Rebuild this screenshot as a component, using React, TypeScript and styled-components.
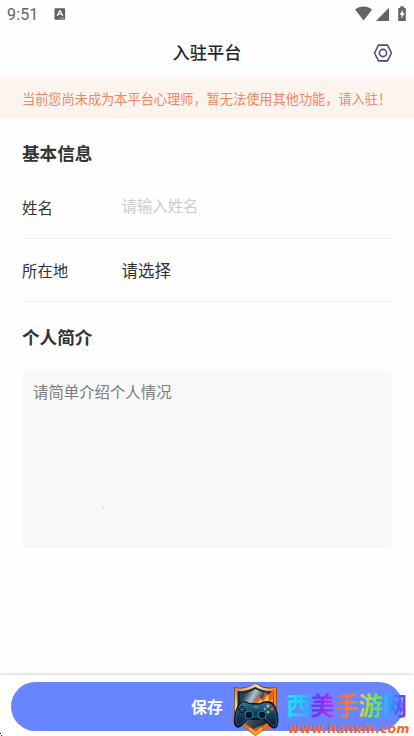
import React from "react";
import styled, { createGlobalStyle } from "styled-components";

const GlobalStyle = createGlobalStyle`
  * { box-sizing: border-box; }
  html, body { margin: 0; background: #fff; overflow: hidden; }
  body, input, textarea, button {
    font-family: "Noto Sans CJK SC", sans-serif;
  }
`;

const Screen = styled.main`
  width: 414px;
  height: 736px;
  display: flex;
  flex-direction: column;
  overflow: hidden;
  position: relative;
  background: #fefefe;
  color: #303234;
`;

const StatusBar = styled.div`
  height: 28px;
  flex: none;
  display: flex;
  align-items: center;
  justify-content: space-between;
  padding: 0 6px 0 7px;
  color: #646464;
`;

const StatusGroup = styled.div`
  display: flex;
  align-items: center;
`;

const Clock = styled.span`
  font: 400 16px/28px Roboto, sans-serif;
  letter-spacing: 0.15px;
  width: 47px;
  padding-top: 1px;
`;

const Header = styled.header`
  height: 50px;
  flex: none;
  display: grid;
  grid-template-columns: 40px 1fr 40px;
  align-items: center;
`;

const Title = styled.h1`
  grid-column: 2;
  margin: 0;
  text-align: center;
  font-size: 17.2px;
  line-height: 48px;
  height: 50px;
  font-weight: 500;
  color: #242424;
`;

const SettingsButton = styled.button`
  border: 0;
  padding: 0;
  background: none;
  width: 20px;
  height: 20px;
  margin-left: -1px;
  display: flex;
`;

const Notice = styled.div`
  height: 41px;
  flex: none;
  padding-left: 22px;
  background: #fcf4ef;
  color: #f18764;
  font-size: 13.2px;
  line-height: 41px;
  white-space: nowrap;
`;

const Form = styled.form`
  flex: 1;
  padding: 0 22px;
`;

const SectionTitle = styled.h2<{ $height: number; $line: number }>`
  margin: 0;
  height: ${(p) => p.$height}px;
  line-height: ${(p) => p.$line}px;
  font-size: 17.6px;
  font-weight: 700;
`;

const Field = styled.label<{ $height: number }>`
  display: grid;
  grid-template-columns: 100px 1fr;
  align-items: center;
  height: ${(p) => p.$height}px;
  border-bottom: 1px solid #f0f0f1;
`;

const FieldName = styled.span`
  font-size: 15.4px;
  line-height: 24px;
`;

const TextInput = styled.input`
  border: 0;
  padding: 0;
  margin: -4px 0 0 -0.5px;
  outline: 0;
  background: none;
  width: 100%;
  height: 28px;
  font-size: 15.4px;
  &::placeholder { color: #cbcccd; }
`;

const SelectValue = styled.span`
  margin-left: -0.5px;
  font-size: 16.5px;
  line-height: 24px;
`;

const Biography = styled.textarea`
  display: block;
  width: 370px;
  height: 177px;
  resize: none;
  outline: 0;
  border: 0;
  border-radius: 5px;
  padding: 8px 11px;
  background: #f8f8f8;
  font-size: 15.4px;
  line-height: 24px;
  &::placeholder { color: #7d7d7d; }
`;

const Footer = styled.footer`
  height: 61px;
  flex: none;
  padding: 7px 11px 0;
  background: #fff;
  box-shadow: 0 -1px 3px rgba(0, 0, 0, 0.17);
`;

const SaveButton = styled.button`
  display: block;
  width: 392px;
  height: 49px;
  border: 0;
  border-radius: 25px;
  background: #6785ff;
  color: #fff;
  font-size: 16px;
  font-weight: 700;
  line-height: 48px;
  padding: 0 0 1px;
`;

const Watermark = styled.div`
  position: absolute;
  left: 231px;
  top: 682px;
  display: flex;
`;

const BrandText = styled.div`
  width: 128px;
  margin-left: 6px;
`;

const BrandName = styled.div`
  display: flex;
  height: 38px;
  margin-top: 5px;
  font-size: 24.5px;
  font-weight: 700;
  line-height: 36px;
`;

const BrandGlyph = styled.span<{ $fill: string }>`
  flex: none;
  width: 24.2px;
  background: ${(p) => p.$fill};
  background-clip: text;
  -webkit-background-clip: text;
  color: transparent;
`;

const BrandUrl = styled.div`
  margin: -5px 0 0 2px;
  font: italic 700 12.7px/18px "DejaVu Sans", sans-serif;
  color: #f16831;
  white-space: nowrap;
`;

const Speck = styled.i<{ $x: number; $y: number; $size: number; $color: string }>`
  position: absolute;
  left: ${(p) => p.$x}px;
  top: ${(p) => p.$y}px;
  width: ${(p) => p.$size}px;
  height: ${(p) => p.$size}px;
  background: ${(p) => p.$color};
`;

const brand = [
  ["西", "linear-gradient(100deg, #12edf0 20%, #22b7fa 85%)"],
  ["美", "linear-gradient(100deg, #4b45f8 10%, #8b2cf0 50%, #e62ce0)"],
  ["手", "linear-gradient(100deg, #ff5a3c, #ff9010)"],
  ["游", "linear-gradient(100deg, #ffc52e 5%, #7cec48 50%, #1fe0a4)"],
  ["网", "linear-gradient(100deg, #1fd0fa 10%, #3670ff 55%, #8a28ea 90%)"],
];

const KeyboardIcon = () => (
  <svg width="12" height="12" viewBox="0 0 12 12">
    <rect x=".5" y=".2" width="10.6" height="11.5" rx=".8" fill="#606060" />
    <path d="M3.1 8 5.6 2.8h.8L8.7 8M4.2 6.2h3.4" fill="none" stroke="#fff" strokeWidth="1.25" />
    <path d="M6.3 10h1.2M8.7 10h1.2" stroke="#ddd" />
  </svg>
);

const SignalIcons = () => (
  <svg width="53" height="16" viewBox="0 0 53 16" fill="#646464">
    <path d="M0 3.5C5.2-.4 12 -.4 17.2 3.5L8.6 14.4Z" />
    <path d="M34 1.8V15H21Z" />
    <path d="M43.2 2h2V.2h3.6V2h2v13h-7.6Z" />
    <path d="m47.9 3.7-3.4 5h2v3.7l3.3-5.3h-1.9Z" fill="#fff" />
  </svg>
);

const SettingsIcon = () => (
  <svg width="20" height="20" viewBox="0 0 20 20" fill="none" stroke="#4b4e70" strokeWidth="1.6" strokeLinejoin="round">
    <path d="M5.5 2.1h9L18.5 10l-4 7.9h-9L1.5 10Z" />
    <circle cx="10" cy="10" r="3.6" />
  </svg>
);

const ControllerShield = () => (
  <svg width="49" height="54" viewBox="0 0 49 54">
    <defs>
      <linearGradient id="rim" x2=".8" y2="1">
        <stop stopColor="#c4793e" /><stop offset=".3" stopColor="#ffe2a2" />
        <stop offset=".55" stopColor="#e8842c" /><stop offset="1" stopColor="#ffa11d" />
      </linearGradient>
      <linearGradient id="steel" x2="1" y2=".7">
        <stop stopColor="#182e41" /><stop offset=".25" stopColor="#2b4455" /><stop offset=".4" stopColor="#b7c2c6" /><stop offset=".55" stopColor="#3d5564" /><stop offset="1" stopColor="#101721" />
      </linearGradient>
      <linearGradient id="pad" y2="1" x2="0">
        <stop stopColor="#347091" /><stop offset=".4" stopColor="#194561" /><stop offset="1" stopColor="#071c30" />
      </linearGradient>
    </defs>
    <path d="M24.5 1C18 5 10 7 3 5v22c0 12 12 20 21.5 27C35 47 46 39 46 27V5C38 7 30 5 24.5 1Z" fill="#633023" />
    <path d="M24.5 3C18 7 11 9 5 7v20c0 11 10 18 19.5 25C34 45 44 38 44 27V7C37 9 30 7 24.5 3Z" fill="url(#steel)" stroke="url(#rim)" strokeWidth="2.7" />
    <path d="M8 10c6 1 11-1 16.5-4C30 9 35 11 41 10v15H8Z" fill="none" stroke="#19242e" strokeWidth="1.5" />
    <path d="M20 23c3-5 6-3 7-10l4 5 4-9 1 5 7-7-1 16 5 4-4 7-24-4Z" fill="#f35a15" />
    <path d="m25 22 5-5 2 3 5-8 1 8 4-3-3 11Z" fill="#ffc542" />
    <path d="M3 23C0 31 1 42 6 44l5-5 11 8 13-5 9-17 3 9-7 13-10 1-5 4-12-7-9-2C-1 39-1 31 3 23Z" fill="#ed641d" opacity=".85" />
    <path d="M10 20c4-2 7 1 10 1h9c4-2 9-3 13 0 5 5 7 19 4 24-4 5-9-3-13-7H16c-3 4-8 11-12 6-3-5 0-20 6-24Z" fill="#07172a" />
    <path d="M11 21c3-1 6 1 9 2h9c4-2 8-3 12 0 4 5 5 16 4 20-3 4-8-5-12-8H17c-4 4-8 10-11 7-3-4 0-17 5-21Z" fill="url(#pad)" stroke="#277393" strokeWidth=".8" />
    <circle cx="18" cy="33" r="4" fill="#061524" stroke="#247fa4" />
    <circle cx="31" cy="33" r="4" fill="#061524" stroke="#247fa4" />
    <path d="M11 24v7m-3.5-3.5h7" stroke="#071625" strokeWidth="2.4" />
    <path d="M11 25v5m-2.5-2.5h5" stroke="#4a9cb5" strokeWidth=".7" />
    <circle cx="37" cy="24" r="1.5" fill="#ffba36" /><circle cx="41" cy="27" r="1.5" fill="#f34e4d" />
    <circle cx="37" cy="30" r="1.5" fill="#68cd60" /><circle cx="34" cy="27" r="1.4" fill="#31b9de" />
    <path d="M23 25h4" stroke="#40afd0" />
    <path d="m18 46 6.5 5 6.5-5" fill="none" stroke="#ffad28" strokeWidth="2" />
  </svg>
);

export default function App() {
  return (
    <>
      <GlobalStyle />
      <Screen>
        <StatusBar>
          <StatusGroup><Clock>9:51</Clock><KeyboardIcon /></StatusGroup>
          <SignalIcons />
        </StatusBar>
        <Header>
          <Title>入驻平台</Title>
          <SettingsButton aria-label="设置"><SettingsIcon /></SettingsButton>
        </Header>
        <Notice>当前您尚未成为本平台心理师，暂无法使用其他功能，请入驻！</Notice>
        <Form>
          <SectionTitle $height={57} $line={68}>基本信息</SectionTitle>
          <Field $height={63}>
            <FieldName>姓名</FieldName>
            <TextInput placeholder="请输入姓名" />
          </Field>
          <Field $height={63}>
            <FieldName>所在地</FieldName>
            <SelectValue>请选择</SelectValue>
          </Field>
          <SectionTitle $height={69} $line={70}>个人简介</SectionTitle>
          <Biography placeholder="请简单介绍个人情况" />
        </Form>
        <Footer><SaveButton>保存</SaveButton></Footer>
        <Watermark>
          <ControllerShield />
          <BrandText>
            <BrandName>
              {brand.map(([glyph, fill]) => <BrandGlyph key={glyph} $fill={fill}>{glyph}</BrandGlyph>)}
            </BrandName>
            <BrandUrl>www.hanxm.com</BrandUrl>
          </BrandText>
        </Watermark>
        <Speck $x={103} $y={507} $size={1} $color="#aaa" />
        <Speck $x={0} $y={733} $size={1} $color="#111" />
        <Speck $x={1} $y={735} $size={1} $color="#111" />
      </Screen>
    </>
  );
}
